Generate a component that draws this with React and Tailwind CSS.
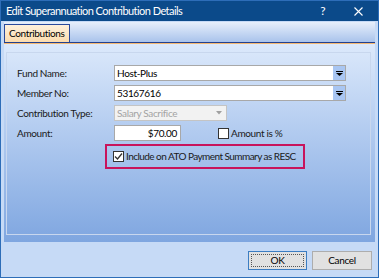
import React from "react";

const font = { fontFamily: "Lato, 'Liberation Sans', sans-serif" };

function ComboArrow({ color = "#000" }) {
  return (
    <svg width="7" height="5" viewBox="0 0 7 5">
      <rect x="0" y="0" width="7" height="1" fill={color} />
      <path d="M0 2 H7 L3.5 5 Z" fill={color} />
    </svg>
  );
}

function Combo({ value, width }) {
  return (
    <div
      className={`flex items-center h-[16px] border border-[#a8a8a8] bg-white ${width}`}
    >
      <span className="flex-1 pl-[2px] text-[10px] tracking-[-0.35px] text-black leading-none">
        {value}
      </span>
      <span className="flex h-[14px] w-[12px] items-center justify-center bg-[#a9c6f2]">
        <ComboArrow />
      </span>
    </div>
  );
}

function CheckBox({ checked }) {
  return (
    <span className="flex h-[11px] w-[11px] shrink-0 items-center justify-center border border-[#333] bg-white">
      {checked && (
        <svg width="9" height="9" viewBox="0 0 9 9">
          <path d="M1 4.5 L3.5 7 L8 1.5" fill="none" stroke="#333" strokeWidth="1.3" />
        </svg>
      )}
    </span>
  );
}

function Row({ label, children }) {
  return (
    <div className="flex h-[20px] items-center">
      <span className="w-[97px] text-[10px] tracking-[-0.35px] text-[#1a1a1a]">{label}</span>
      {children}
    </div>
  );
}

export default function App() {
  return (
    <div
      style={font}
      className="flex h-[278px] w-[379px] flex-col border border-[#2d6db8] bg-[#c6daf6]"
    >
      {/* Title bar */}
      <div className="flex h-[20px] shrink-0 items-center bg-[#0b4a8a] pl-[5px] text-white">
        <span className="flex-1 text-[11px] tracking-[-0.55px]">
          Edit Superannuation Contribution Details
        </span>
        <span className="w-[10px] text-center text-[12px]">?</span>
        <span className="ml-[26px] mr-[15px] flex w-[9px] justify-center">
          <svg width="9" height="9" viewBox="0 0 9 9">
            <path d="M0.5 0.5 L8.5 8.5 M8.5 0.5 L0.5 8.5" stroke="white" strokeWidth="1.1" />
          </svg>
        </span>
      </div>

      {/* Tab control */}
      <div className="mx-[3px] mt-[1px] flex flex-col">
        <div className="flex h-[20px] items-end bg-gradient-to-b from-[#e7effb] to-[#a9c3eb]">
          <div className="flex h-[18px] items-center border border-b-0 border-[#2a4a9c] bg-gradient-to-b from-[#fff1dc] to-[#fbdcae] px-[4px] text-[10px] tracking-[-0.35px] text-black">
            Contributions
          </div>
        </div>
        <div className="h-px bg-[#22418f]" />
        <div className="h-px bg-[#f4b872]" />
        <div className="flex h-[198px] flex-col bg-gradient-to-b from-[#dce9fb] to-[#7fa6e0] pb-[7px] pl-[2px] pr-[4px] pt-[8px]">
          <div className="flex flex-1 flex-col border border-[#c8d7ee] pl-[10px] pt-[10px]">
            <Row label="Fund Name:">
              <Combo value="Host-Plus" width="w-[232px]" />
            </Row>
            <Row label="Member No:">
              <Combo value="53167616" width="w-[232px]" />
            </Row>
            <Row label="Contribution Type:">
              <div className="flex h-[16px] w-[113px] items-center border border-[#c4c4c4] bg-[#f2f2f2]">
                <span className="flex-1 pl-[2px] text-[10px] tracking-[-0.35px] text-[#a3a3a3]">
                  Salary Sacrifice
                </span>
                <span className="flex w-[14px] justify-center">
                  <svg width="6" height="4" viewBox="0 0 6 4">
                    <path d="M0 0 H6 L3 3.5 Z" fill="#a0a0a0" />
                  </svg>
                </span>
              </div>
            </Row>
            <Row label="Amount:">
              <div className="flex h-[16px] w-[67px] items-center justify-end border border-[#a8a8a8] bg-white pr-[3px] text-[10px] tracking-[-0.35px] text-black">
                $70.00
              </div>
              <div className="ml-[37px] flex items-center gap-[2px] text-[10px] tracking-[-0.35px] text-[#1a1a1a]">
                <CheckBox />
                <span>Amount is %</span>
              </div>
            </Row>
            <div className="ml-[88px] mt-[1px] flex h-[25px] w-[200px] items-center gap-[2px] border-2 border-[#c8145c] pl-[6px] text-[10px] tracking-[-0.55px] text-[#1a1a1a]">
              <CheckBox checked />
              <span className="whitespace-nowrap">Include on ATO Payment Summary as RESC</span>
            </div>
          </div>
        </div>
      </div>

      {/* Buttons */}
      <div className="flex flex-1 items-start justify-end gap-[5px] pr-[6px] pt-[9px]">
        <button className="flex h-[19px] w-[59px] items-center justify-center border border-[#3c7dc2] bg-[#e1e1e1] p-[2px]">
          <span className="flex h-full w-full items-center justify-center border border-dotted border-[#555] text-[10px] tracking-[-0.35px] text-black">
            OK
          </span>
        </button>
        <button className="flex h-[19px] w-[60px] items-center justify-center border border-[#adadad] bg-[#e1e1e1] text-[10px] tracking-[-0.35px] text-black">
          Cancel
        </button>
      </div>
    </div>
  );
}
